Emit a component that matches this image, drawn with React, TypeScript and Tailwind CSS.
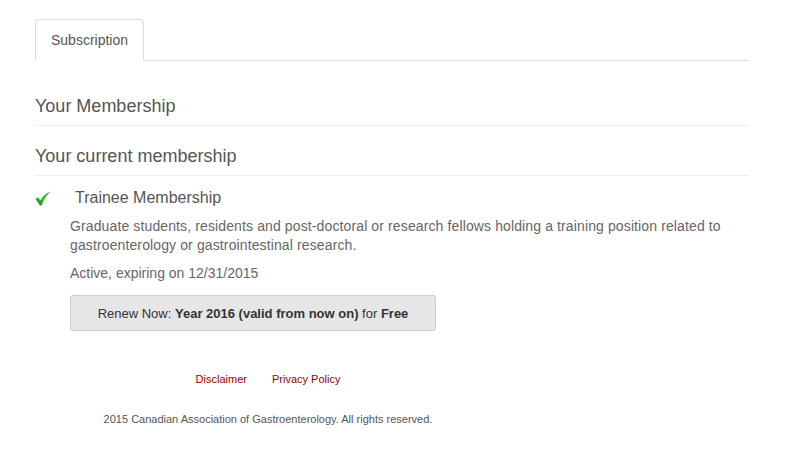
import React from "react";

function CheckIcon() {
  return (
    <svg width="16" height="15" viewBox="0 0 16 15" className="shrink-0">
      <defs>
        <linearGradient id="chk" x1="0" y1="1" x2="1" y2="0">
          <stop offset="0" stopColor="#1a6e1a" />
          <stop offset="0.45" stopColor="#33c233" />
          <stop offset="1" stopColor="#27a827" />
        </linearGradient>
      </defs>
      <path
        d="M0.5 8 L3 6.3 L5.3 9.2 C7.6 5.4 11 2.2 15.5 0.5 C12 3.6 9 8 6.6 14.5 L5 14.5 Z"
        fill="url(#chk)"
      />
    </svg>
  );
}

export default function App() {
  return (
    <div className="min-h-screen bg-white font-['Liberation_Sans',Arial,sans-serif]">
      <div className="ml-[35px] w-[713px] pt-[19px]">
        {/* Tabs */}
        <div className="flex border-b border-[#ddd]">
          <div className="-mb-px rounded-t border border-[#ddd] border-b-white bg-white px-[15px] py-[10px] text-[14px] leading-[20px] text-[#555]">
            Subscription
          </div>
        </div>

        {/* Headings */}
        <h3 className="mt-[35px] border-b border-[#eee] pb-[9px] text-[18px] leading-[20px] text-[#555]">
          Your Membership
        </h3>
        <h3 className="mt-[20px] border-b border-[#eee] pb-[9px] text-[18px] leading-[20px] text-[#555]">
          Your current membership
        </h3>

        {/* Membership */}
        <div className="mt-[12px] flex items-center">
          <CheckIcon />
          <span className="ml-[24px] text-[16px] leading-[20px] text-[#555]">
            Trainee Membership
          </span>
        </div>
        <div className="ml-[35px] mt-[9px] text-[14px] leading-[19px] text-[#666]">
          <p className="tracking-[0.12px]">
            Graduate students, residents and post-doctoral or research fellows holding a training position related to
            gastroenterology or gastrointestinal research.
          </p>
          <p className="mt-[9px]">Active, expiring on 12/31/2015</p>
          <button className="mt-[12px] h-[36px] w-[366px] rounded-[3px] border border-[#ccc] bg-[#e6e6e6] text-[13px] text-[#333]">
            Renew Now: <b>Year 2016 (valid from now on)</b> for <b>Free</b>
          </button>
        </div>

        {/* Footer */}
        <div className="mt-[41px] w-[466px] text-center text-[11px] leading-[14px]">
          <div className="flex justify-center gap-[25px] text-[#990000]">
            <a href="#">Disclaimer</a>
            <a href="#">Privacy Policy</a>
          </div>
          <p className="mt-[26px] text-[#555]">
            2015 Canadian Association of Gastroenterology. All rights reserved.
          </p>
        </div>
      </div>
    </div>
  );
}
